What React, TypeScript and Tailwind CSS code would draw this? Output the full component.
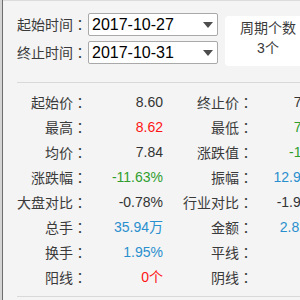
import React from "react";

type Cell = { label: string; value: string; color: string };

const DARK = "text-[#333333]";
const RED = "text-[#ff1414]";
const GREEN = "text-[#2f9e2f]";
const BLUE = "text-[#2a8fce]";

const rows: [Cell, Cell][] = [
  [
    { label: "起始价", value: "8.60", color: DARK },
    { label: "终止价", value: "7.60", color: DARK },
  ],
  [
    { label: "最高", value: "8.62", color: RED },
    { label: "最低", value: "7.51", color: GREEN },
  ],
  [
    { label: "均价", value: "7.84", color: DARK },
    { label: "涨跌值", value: "-1.00", color: GREEN },
  ],
  [
    { label: "涨跌幅", value: "-11.63%", color: GREEN },
    { label: "振幅", value: "12.91%", color: BLUE },
  ],
  [
    { label: "大盘对比", value: "-0.78%", color: DARK },
    { label: "行业对比", value: "-1.96%", color: DARK },
  ],
  [
    { label: "总手", value: "35.94万", color: BLUE },
    { label: "金额", value: "2.82亿", color: BLUE },
  ],
  [
    { label: "换手", value: "1.95%", color: BLUE },
    { label: "平线", value: "", color: DARK },
  ],
  [
    { label: "阳线", value: "0个", color: RED },
    { label: "阴线", value: "", color: DARK },
  ],
];

function Label({ text }: { text: string }) {
  return (
    <span className="whitespace-nowrap">
      {text}
      <span className="font-['Noto_Sans_CJK_JP',sans-serif]">：</span>
    </span>
  );
}

function DateSelect({ label, value }: { label: string; value: string }) {
  return (
    <div className="flex h-[23px] items-center">
      <div className="w-[71px] text-[14px] text-[#3a3a3a]">
        <Label text={label} />
      </div>
      <div className="flex h-[23px] w-[130px] items-center justify-between rounded-[2px] border border-[#a9a9a9] bg-white pl-[3px] pr-[4px]">
        <span className="font-['Liberation_Sans',sans-serif] text-[16px] leading-none text-black">
          {value}
        </span>
        <span className="h-0 w-0 border-x-[5px] border-t-[6px] border-x-transparent border-t-[#4d4d4d]" />
      </div>
    </div>
  );
}

export default function App() {
  return (
    <div className="flex h-[300px] w-[300px] overflow-hidden bg-[#f4f4f4] font-['Liberation_Sans','Noto_Sans_CJK_SC',sans-serif]">
      <div className="w-[2px] shrink-0 bg-[#d4d4d4]" />
      <div className="w-px shrink-0 bg-[#6e6e6e]" />
      <div className="flex min-w-0 flex-1 flex-col">
        <div className="h-px shrink-0 bg-[#dcdcdc]" />
        <div className="pl-[14px] pt-[12px]">
          <div className="flex items-start">
            <div className="flex flex-col gap-[5px]">
              <DateSelect label="起始时间" value="2017-10-27" />
              <DateSelect label="终止时间" value="2017-10-31" />
            </div>
            <div className="ml-[7px] mt-[3px] h-[50px] w-[86px] shrink-0 rounded-[4px] bg-white pt-[2px] text-center text-[14px] leading-[20px] text-[#3a3a3a]">
              <div className="whitespace-nowrap">周期个数</div>
              <div>3个</div>
            </div>
          </div>
          <div className="mt-[16px] h-px bg-[#d9d9d9]" />
          <div className="mt-[7px] grid w-max grid-cols-[70px_76px_90px_68px] text-[14px]">
            {rows.map((row, i) => (
              <React.Fragment key={i}>
                {row.map((cell) => (
                  <React.Fragment key={cell.label}>
                    <div className="flex h-[25px] items-center justify-end text-[#3a3a3a]">
                      <Label text={cell.label} />
                    </div>
                    <div
                      className={`flex h-[25px] items-center justify-end whitespace-nowrap ${cell.color}`}
                    >
                      {cell.value}
                    </div>
                  </React.Fragment>
                ))}
              </React.Fragment>
            ))}
          </div>
          <div className="mt-[6px] h-px bg-[#d9d9d9]" />
        </div>
      </div>
    </div>
  );
}
